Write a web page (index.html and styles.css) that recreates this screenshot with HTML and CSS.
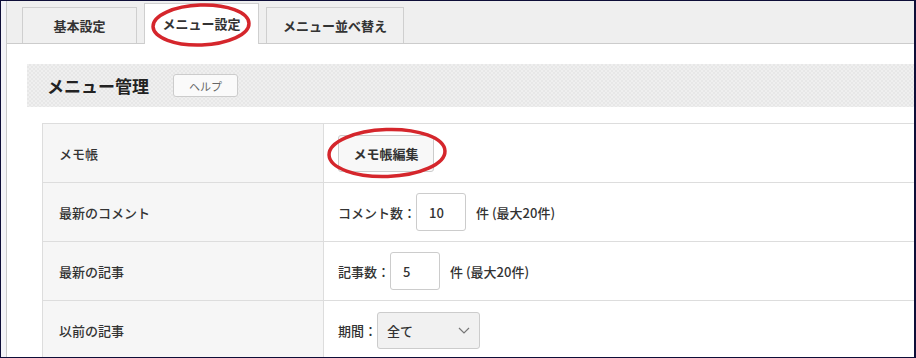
FILE: index.html
```html
<!DOCTYPE html>
<html lang="ja">
<head>
  <meta charset="UTF-8" />
  <meta name="viewport" content="width=device-width, initial-scale=1.0" />
  <title>メニュー設定</title>
  <link rel="stylesheet" href="styles.css">
</head>
<body>
  <div class="frame">
    <div class="page">
      <div class="tabs">
        <div class="tab">基本設定</div>
        <div class="tab active">メニュー設定</div>
        <div class="tab">メニュー並べ替え</div>
      </div>

      <div class="panel">
        <div class="section-head">
          <h2>メニュー管理</h2>
          <button class="help" type="button">ヘルプ</button>
        </div>

        <table class="menu-table">
          <tr class="first">
            <th>メモ帳</th>
            <td><button class="edit" type="button">メモ帳編集</button></td>
          </tr>
          <tr>
            <th>最新のコメント</th>
            <td>
              <div class="field">
                <span>コメント数：</span>
                <input type="text" class="num" value="10" />
                <span class="note">件 (最大20件)</span>
              </div>
            </td>
          </tr>
          <tr>
            <th>最新の記事</th>
            <td>
              <div class="field">
                <span>記事数：</span>
                <input type="text" class="num" value="5" />
                <span class="note">件 (最大20件)</span>
              </div>
            </td>
          </tr>
          <tr>
            <th>以前の記事</th>
            <td>
              <div class="field">
                <span>期間：</span>
                <div class="select">
                  <span>全て</span>
                  <svg width="12" height="7" viewBox="0 0 12 7"><path d="M1 1 L6 6 L11 1" fill="none" stroke="#777" stroke-width="1.2"/></svg>
                </div>
              </div>
            </td>
          </tr>
        </table>
      </div>
    </div>

    <!-- red hand-drawn marks over the screenshot -->
    <svg class="mark mark-tab" width="104" height="48" viewBox="0 0 104 48">
      <ellipse cx="51" cy="23" rx="48" ry="20" fill="none" stroke="#d5262c" stroke-width="3.5" transform="rotate(-2 51 23)"/>
    </svg>
    <svg class="mark mark-edit" width="124" height="54" viewBox="0 0 124 54">
      <ellipse cx="62" cy="27" rx="58" ry="23.5" fill="none" stroke="#d5262c" stroke-width="3.5" transform="rotate(-2 62 27)"/>
    </svg>
  </div>
</body>
</html>
```

FILE: styles.css
```css
body {
  margin: 0;
  font-family: "Noto Sans CJK JP", "Noto Sans", sans-serif;
  font-size: 13px;
  color: #333;
  background: #fff;
}
.frame {
  position: relative;
  width: 916px;
  height: 358px;
  box-sizing: border-box;
  border: 1px solid #0e0e38;
  border-right-width: 2px;
  background: #f3f3f7;
  overflow: hidden;
}
.page {
  margin-left: 5px;
  height: 100%;
  border-left: 1px solid #c9c9c9;
  background: #fff;
}
.tabs {
  display: flex;
  align-items: flex-end;
  gap: 7px;
  height: 43px;
  box-sizing: border-box;
  padding-left: 15px;
  background: #efefef;
  border-bottom: 1px solid #cccccc;
}
.tab {
  min-width: 115px;
  height: 36px;
  box-sizing: border-box;
  padding: 0 16px;
  display: flex;
  align-items: center;
  justify-content: center;
  background: #f0f0f0;
  border: 1px solid #cfcfcf;
  border-bottom: none;
  font-weight: bold;
  color: #333;
}
.tab.active {
  height: 41px;
  margin-bottom: -1px;
  padding-bottom: 2px;
  background: #fff;
}
.panel {
  padding: 20px 0 0 20px;
}
.section-head {
  display: flex;
  align-items: center;
  height: 43px;
  padding-left: 20px;
  background-color: #ececec;
  background-image: repeating-conic-gradient(#e7e7e7 0 25%, #efefef 0 50%);
  background-size: 4px 4px;
}
.section-head h2 {
  margin: 0;
  font-size: 17px;
  font-weight: bold;
  color: #222;
}
.help {
  margin-left: 24px;
  width: 65px;
  height: 23px;
  padding: 0;
  font-family: inherit;
  font-size: 11px;
  color: #666;
  background: #fafafa;
  border: 1px solid #cccccc;
  border-radius: 3px;
}
.menu-table {
  margin: 16px 0 0 15px;
  width: 900px;
  border-collapse: collapse;
}
.menu-table th,
.menu-table td {
  height: 58px;
  border-top: 1px solid #dddddd;
  padding: 0 14px;
  vertical-align: middle;
  text-align: left;
}
.menu-table th {
  width: 250px;
  padding-left: 16px;
  background: #f6f6f6;
  border-left: 1px solid #dddddd;
  border-right: 1px solid #dddddd;
  font-weight: 500;
  color: #333;
}
.edit {
  width: 96px;
  height: 37px;
  padding: 0;
  font-family: inherit;
  font-size: 13px;
  font-weight: bold;
  color: #333;
  background: #f8f8f8;
  border: 1px solid #cccccc;
  border-radius: 3px;
}
.field {
  display: flex;
  align-items: center;
  font-weight: 500;
}
.num {
  width: 50px;
  height: 38px;
  box-sizing: border-box;
  padding: 0 12px;
  font-family: inherit;
  font-size: 13px;
  font-weight: 500;
  color: #333;
  border: 1px solid #cccccc;
  border-radius: 3px;
}
.note {
  margin-left: 10px;
}
.select {
  width: 103px;
  height: 37px;
  box-sizing: border-box;
  padding: 0 9px;
  display: flex;
  align-items: center;
  justify-content: space-between;
  background: #f1f1f1;
  border: 1px solid #cccccc;
  border-radius: 3px;
}
.mark {
  position: absolute;
}
.mark-tab {
  left: 149px;
  top: 1px;
}
.mark-edit {
  left: 324px;
  top: 125px;
}
```
